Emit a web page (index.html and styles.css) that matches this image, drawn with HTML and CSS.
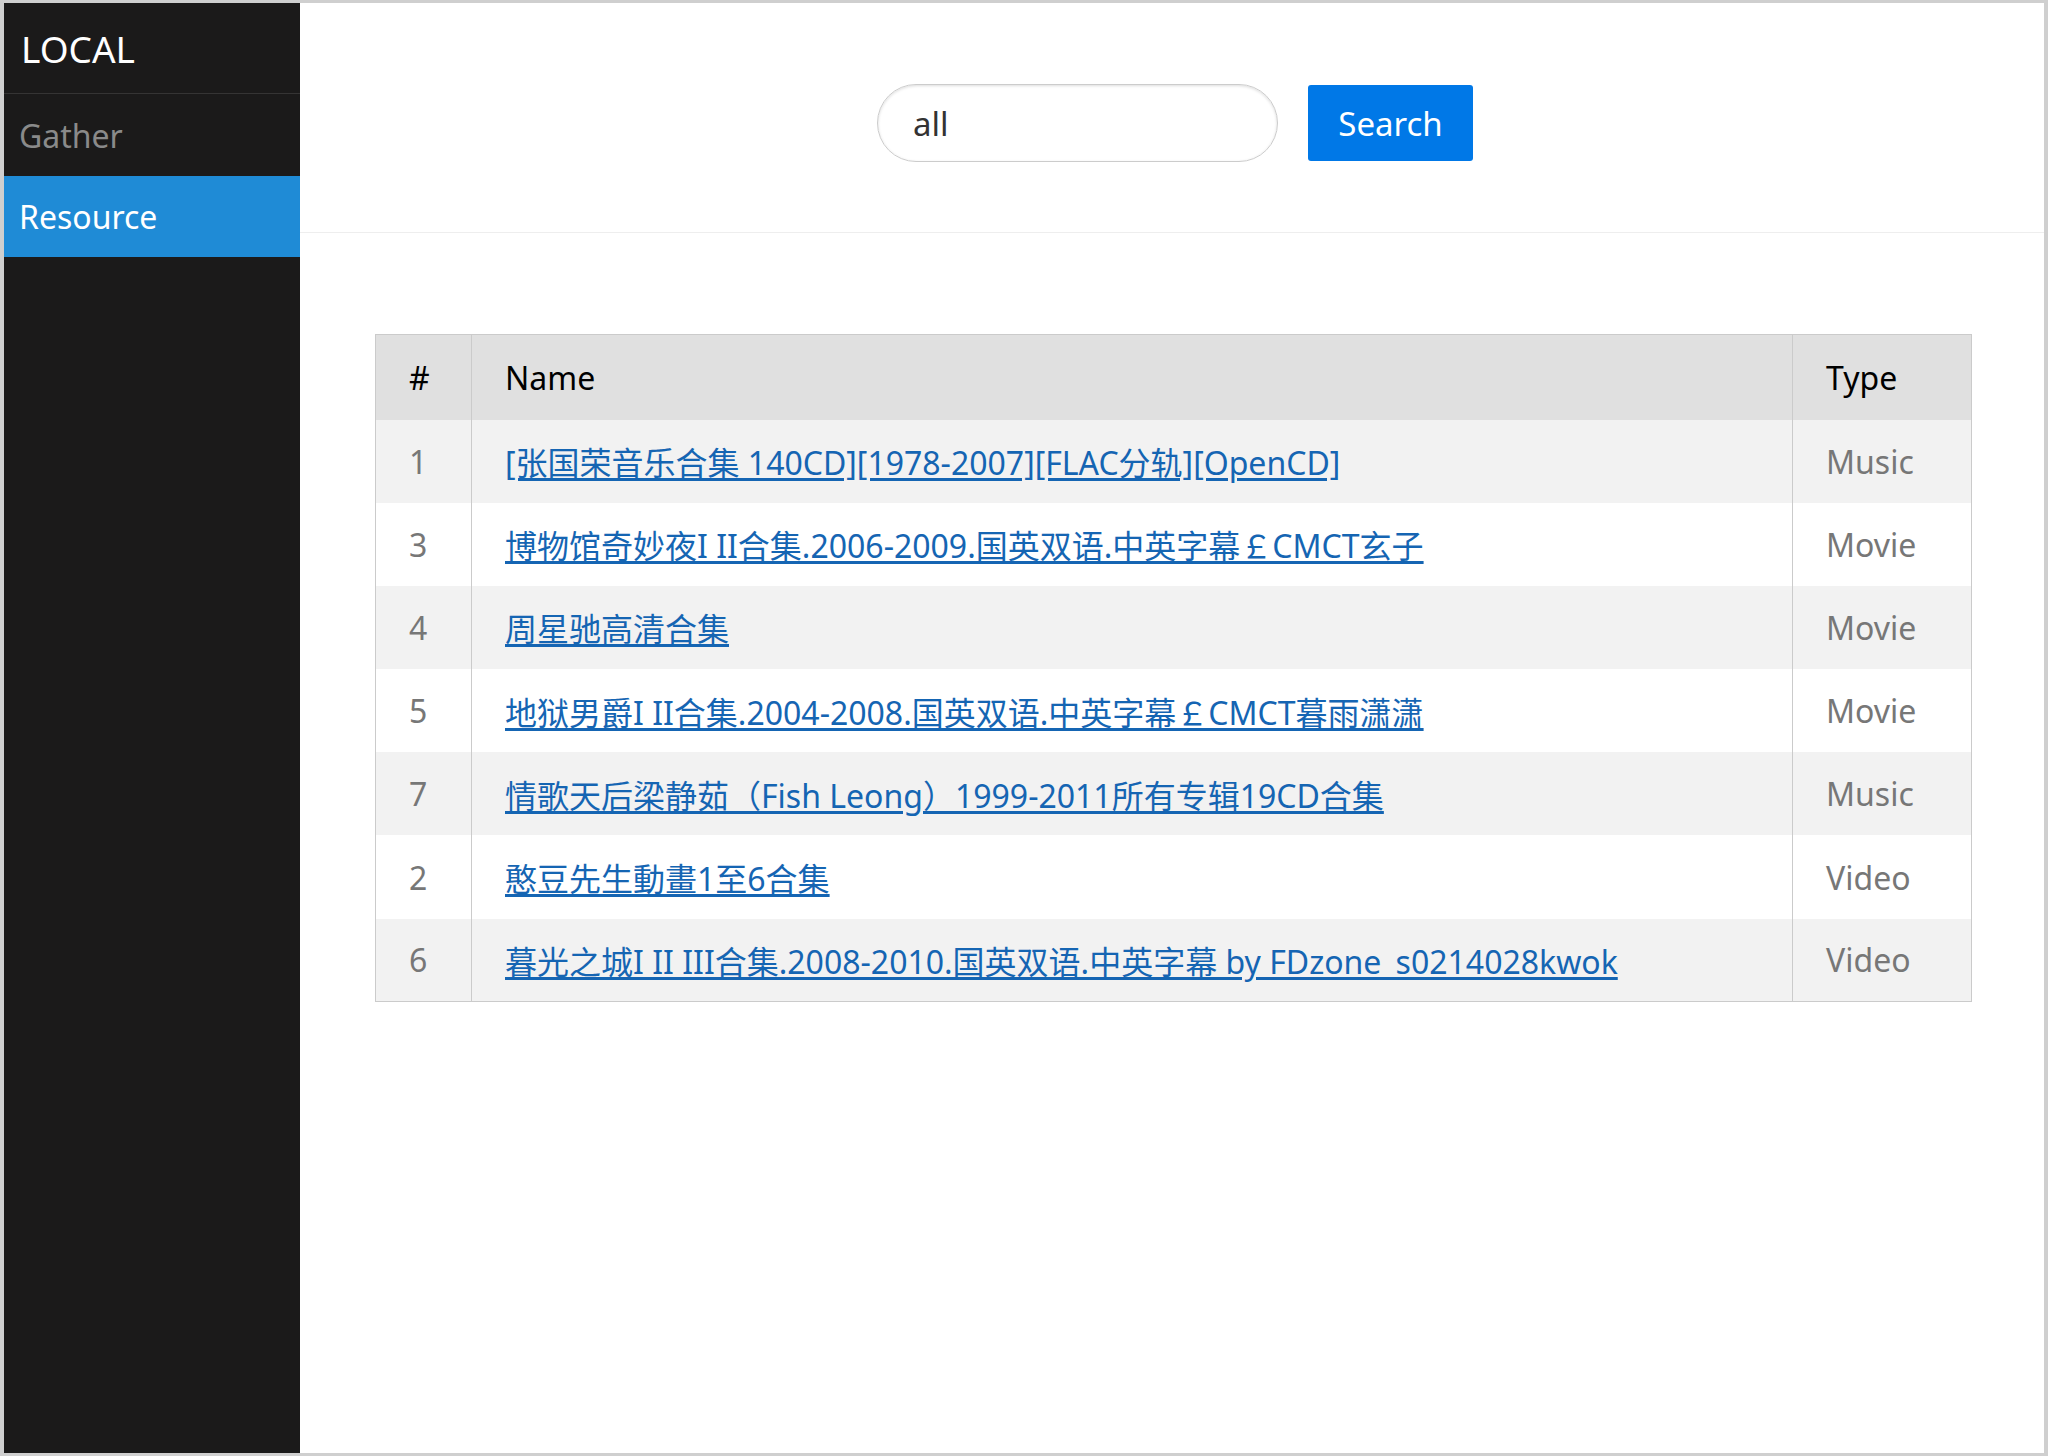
FILE: index.html
```html
<!DOCTYPE html>
<html lang="zh-CN">
<head>
<meta charset="utf-8">
<title>LOCAL - Resource</title>
<link rel="stylesheet" href="styles.css">
</head>
<body>
<div class="layout">
  <nav class="menu">
    <div class="menu-heading">LOCAL</div>
    <a class="menu-link" href="#">Gather</a>
    <a class="menu-link selected" href="#">Resource</a>
  </nav>
  <main class="main">
    <header class="header">
      <form class="search">
        <input class="search-input" type="text" value="all">
        <button class="search-btn" type="button">Search</button>
      </form>
    </header>
    <div class="content">
      <table class="res-table">
        <colgroup>
          <col class="c-num">
          <col class="c-name">
          <col class="c-type">
        </colgroup>
        <thead>
          <tr><th>#</th><th>Name</th><th>Type</th></tr>
        </thead>
        <tbody>
          <tr class="odd"><td>1</td><td><a href="#">[张国荣音乐合集 140CD][1978-2007][FLAC分轨][OpenCD]</a></td><td>Music</td></tr>
          <tr><td>3</td><td><a href="#">博物馆奇妙夜I II合集.2006-2009.国英双语.中英字幕￡CMCT玄子</a></td><td>Movie</td></tr>
          <tr class="odd"><td>4</td><td><a href="#">周星驰高清合集</a></td><td>Movie</td></tr>
          <tr><td>5</td><td><a href="#">地狱男爵I II合集.2004-2008.国英双语.中英字幕￡CMCT暮雨潇潇</a></td><td>Movie</td></tr>
          <tr class="odd"><td>7</td><td><a href="#">情歌天后梁静茹（Fish Leong）1999-2011所有专辑19CD合集</a></td><td>Music</td></tr>
          <tr><td>2</td><td><a href="#">憨豆先生動畫1至6合集</a></td><td>Video</td></tr>
          <tr class="odd"><td>6</td><td><a href="#">暮光之城I II III合集.2008-2010.国英双语.中英字幕 by FDzone_s0214028kwok</a></td><td>Video</td></tr>
        </tbody>
      </table>
    </div>
  </main>
</div>
</body>
</html>
```

FILE: styles.css
```css
* { box-sizing: border-box; }

html, body {
  margin: 0;
  padding: 0;
}

body {
  background: #cfcfcf;
  padding: 3px 4px;
  font-family: "Noto Sans", "Noto Sans CJK SC", sans-serif;
}

.layout {
  display: flex;
  height: 1450px;
  background: #fff;
}

.menu {
  width: 296px;
  flex: none;
  background: #1b1a1a;
  display: flex;
  flex-direction: column;
}

.menu-heading {
  height: 91px;
  border-bottom: 1px solid #353434;
  display: flex;
  align-items: center;
  padding-left: 17px;
  color: #fff;
  font-size: 37px;
}

.menu-link {
  height: 82px;
  display: flex;
  align-items: center;
  padding-left: 15px;
  color: #8a8a8a;
  font-size: 32px;
  text-decoration: none;
}

.menu-link.selected {
  height: 81px;
  background: #1f8bd6;
  color: #fff;
}

.main {
  flex: 1;
  display: flex;
  flex-direction: column;
}

.header {
  height: 230px;
  border-bottom: 1px solid #eee;
  padding-top: 81px;
}

.search {
  display: flex;
  justify-content: center;
  align-items: center;
  gap: 30px;
  margin: 0;
  padding-left: 6px;
}

.search-input {
  width: 401px;
  height: 78px;
  border: 1px solid #ccc;
  border-radius: 40px;
  box-shadow: inset 0 1px 3px #ddd;
  padding: 0 24px 0 35px;
  font-family: inherit;
  font-size: 33px;
  color: #333;
  outline: none;
}

.search-btn {
  width: 165px;
  height: 76px;
  border: none;
  border-radius: 3px;
  background: #0078e7;
  color: #fff;
  font-family: inherit;
  font-size: 33px;
  padding: 0;
}

.content {
  padding: 101px 72px 0 75px;
}

.res-table {
  width: 1597px;
  border-collapse: collapse;
  border: 1px solid #cbcbcb;
  font-size: 32px;
}

.c-num { width: 96px; }
.c-type { width: 179px; }

.res-table th,
.res-table td {
  border-left: 1px solid #cbcbcb;
  padding: 0 0 0 33px;
  text-align: left;
  height: 83.2px;
  color: #777;
  font-weight: normal;
  white-space: nowrap;
}

.res-table th {
  background: #e0e0e0;
  color: #000;
  height: 85px;
}

.res-table tr.odd td {
  background: #f2f2f2;
}

.res-table td a {
  color: #1565b3;
  text-decoration: underline;
  text-underline-offset: 3px;
}
```
